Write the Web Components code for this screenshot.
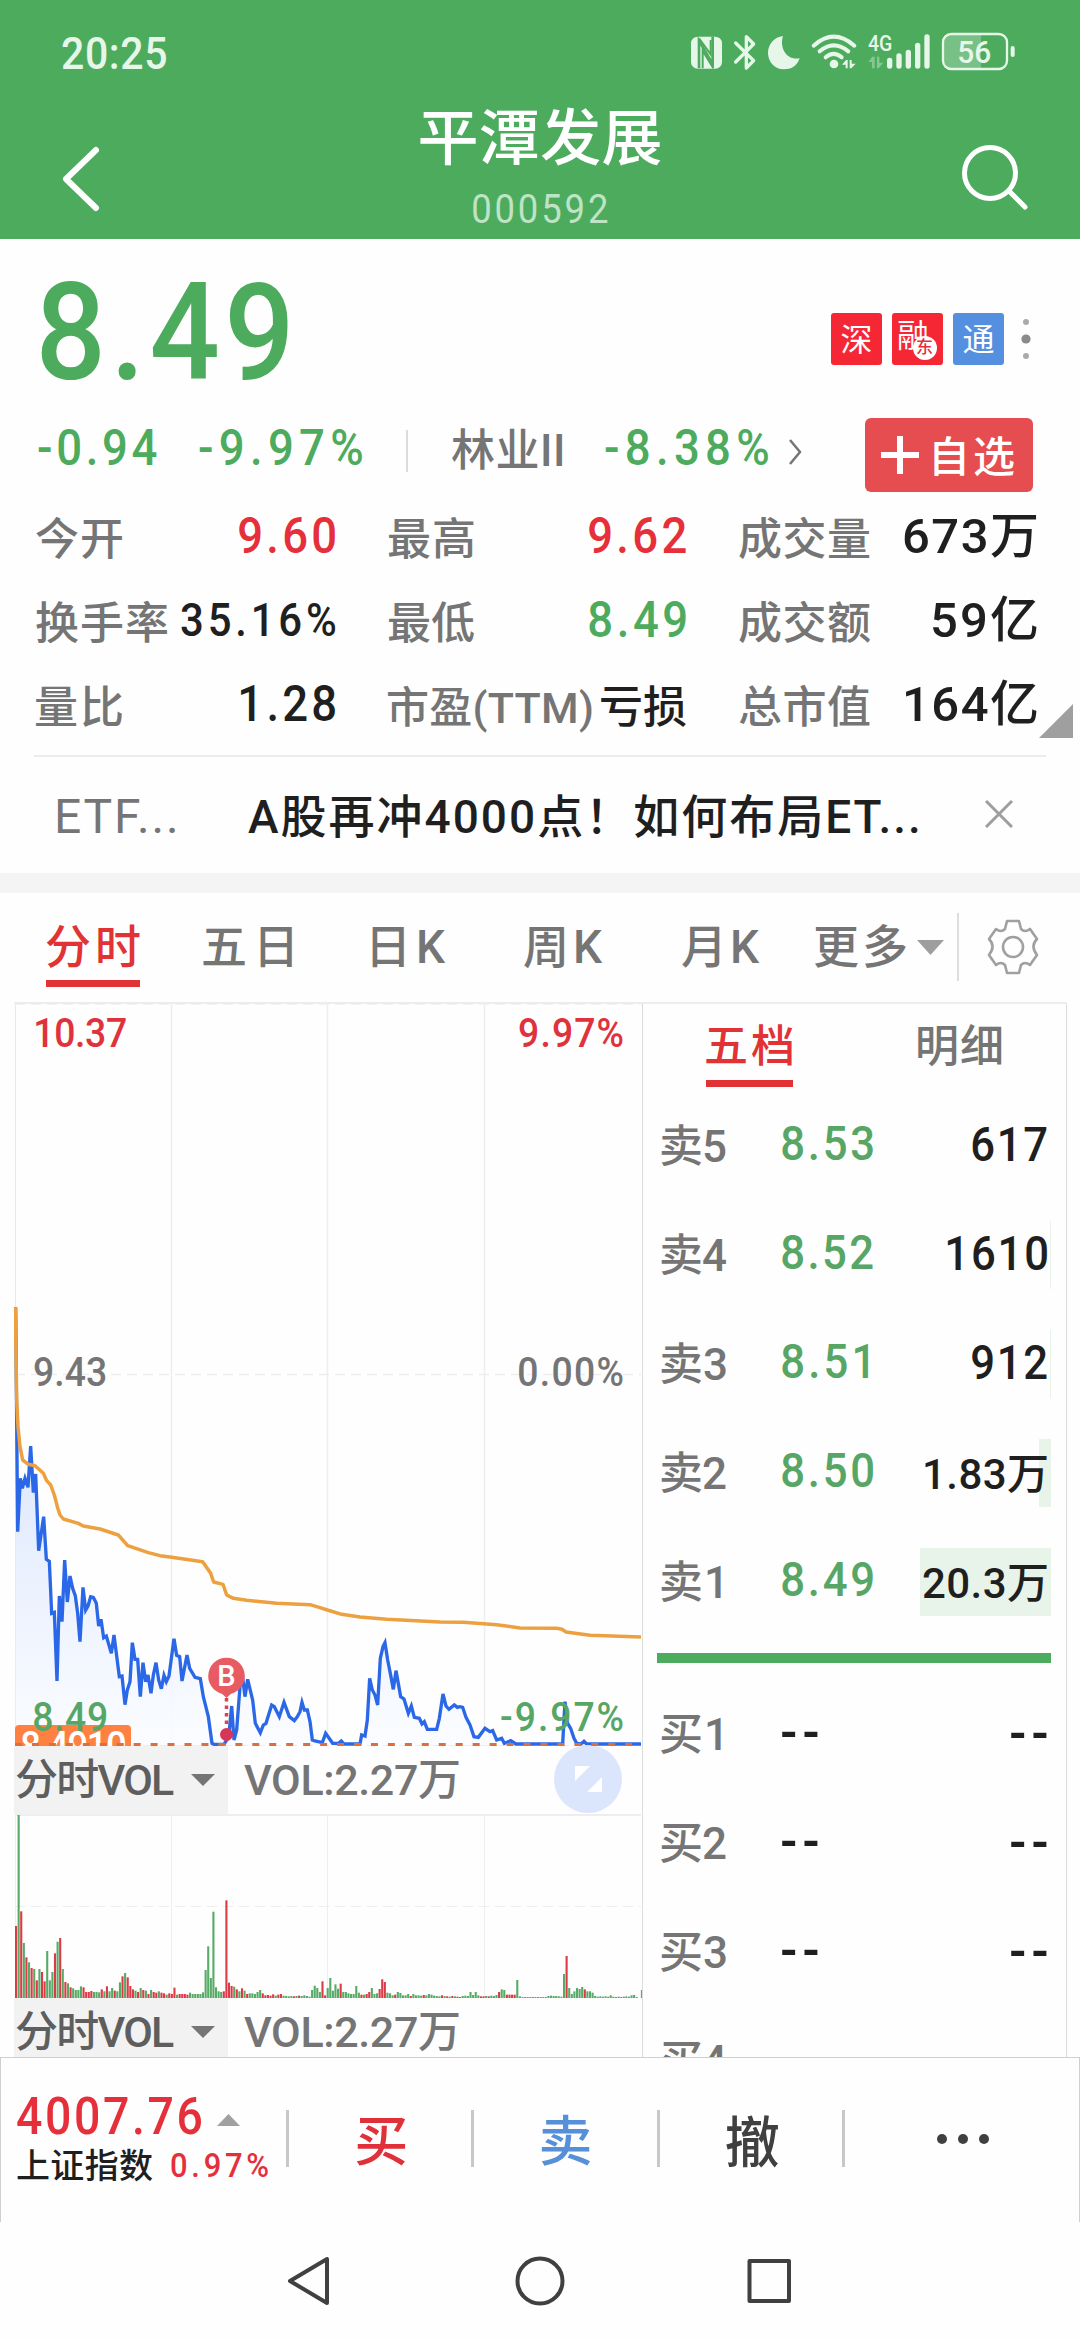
<!DOCTYPE html>
<html lang="zh-CN">
<head>
<meta charset="UTF-8">
<title>平潭发展 000592</title>
<style>
  body {
    margin: 0;
    width: 1080px;
    height: 2340px;
    overflow: hidden;
    background: #fefefe;
    font-family: Roboto, "Noto Sans CJK SC", sans-serif;
    --green: #4dab5e;
    --red: #e5303b;
    --grey: #757575;
    --ink: #1f1f1f;
  }
</style>
</head>
<body>
<stock-page></stock-page>

<script>
// registers a custom element whose shadow root is cloned from a template
function define(name, html, onConnect) {
  const template = document.createElement('template');
  template.innerHTML = '<style>:host, * { box-sizing: border-box; }</style>' + html;

  customElements.define(name, class extends HTMLElement {
    constructor() {
      super();
      this.attachShadow({ mode: 'open' });
      this.shadowRoot.appendChild(template.content.cloneNode(true));
    }

    connectedCallback() {
      if (onConnect) onConnect(this, this.shadowRoot);
    }
  });
}

// one line of text, tracked so that its ink fills the width in the attribute "w";
// plain numbers are drawn a little condensed
const pen = document.createElement('canvas').getContext('2d');

define('fit-text', `
  <style>
    :host { display: block; flex: none; white-space: nowrap; line-height: 1; }
    span { display: block; transform-origin: 0 50%; }
  </style>
  <span><slot></slot></span>
`, (el, root) => {
  const w = Number(el.getAttribute('w'));
  el.style.width = w + 'px';
  el.style.fontSize = el.getAttribute('size') + 'px';
  el.style.fontWeight = el.getAttribute('weight') || 400;
  const css = getComputedStyle(el);
  const text = el.textContent;
  const squeeze = /^[\d.%:-]+$/.test(text) ? 0.91 : 1;
  pen.font = css.fontWeight + ' ' + css.fontSize + ' ' + css.fontFamily;
  const m = pen.measureText(text);
  const ink = m.actualBoundingBoxLeft + m.actualBoundingBoxRight;
  const span = root.querySelector('span');
  span.style.letterSpacing = (text.length > 1 ? (w / squeeze - ink) / (text.length - 1) : 0) + 'px';
  span.style.textIndent = m.actualBoundingBoxLeft + 'px';
  if (squeeze !== 1) span.style.transform = `scaleX(${squeeze})`;
});

define('status-bar', `
  <style>
    :host { display: flex; height: 105px; padding: 20px 50px 0 62px; color: #e6f7e9; justify-content: space-between; }
    fit-text { padding-top: 11px; }
    svg { width: 350px; height: 70px; }
  </style>
  <fit-text w="104" size="45" weight="500">20:25</fit-text>
  <svg viewBox="0 0 1050 210" fill="none" stroke="#e6f7e9">
    <rect x="33" y="50" width="93" height="96" rx="20" fill="#e6f7e9" stroke="none"/>
    <path d="M57 145V62L98 132V50" stroke="#4dab5e" stroke-width="8"/>
    <path d="M68 145V92L100 145M57 55L92 103V60" stroke="#4dab5e" stroke-width="6"/>
    <path d="M167 69L221 122L199 144V50L221 72L167 126" stroke-width="10" stroke-linejoin="round" stroke-linecap="round"/>
    <path d="M309 48C298 82 318 122 359 115C351 139 333 148 312 148C282 148 264 124 264 99C264 72 283 51 309 48Z" fill="#e6f7e9" stroke="none"/>
    <path d="M401 77Q461 23 523 77M419 94Q461 58 505 94M437 112Q461 91 485 112" stroke-width="12" stroke-linecap="round"/>
    <circle cx="462" cy="132" r="13" fill="#e6f7e9" stroke="none"/>
    <path d="M486 134L498 120H503V145H497V134ZM509 120H515V131H527L514 145H509Z" fill="#e6f7e9" stroke="none"/>
    <text x="564" y="94" font-size="66" font-weight="500" textLength="73" lengthAdjust="spacingAndGlyphs" fill="#e6f7e9" stroke="none">4G</text>
    <path d="M565 126L577 110H584V145H576V126ZM591 110H598V128H610L596 145H591Z" fill="#86c792" stroke="none"/>
    <path d="M629 121V138M657 108V138M685 97V138M713 76V138M741 51V138" stroke-width="16" stroke-linecap="round"/>
    <path d="M812 44H903V146H812Q791 146 791 124V66Q791 44 812 44Z" fill="#78c085" stroke="none"/>
    <rect x="789" y="42" width="192" height="105" rx="25" stroke-width="7"/>
    <path d="M998 84V105" stroke-width="12" stroke-linecap="round"/>
    <text x="832" y="129" font-size="95" font-weight="500" textLength="102" lengthAdjust="spacingAndGlyphs" fill="#e6f7e9" stroke="none">56</text>
  </svg>
`);

define('title-bar', `
  <style>
    :host { display: grid; grid-template-columns: 200px 1fr 200px; height: 134px; color: #fff; }
    svg { width: 200px; height: 134px; fill: none; stroke: #fff; stroke-linecap: round; stroke-linejoin: round; }
    div { display: flex; flex-direction: column; align-items: center; gap: 20px; padding-top: 4px; }
    .code { color: #bfe3c5; }
  </style>
  <svg viewBox="0 105 200 134" stroke-width="6"><path d="M96 150L66 179L96 208"/></svg>
  <div>
    <fit-text w="241" size="61" weight="500">平潭发展</fit-text>
    <fit-text class="code" w="134" size="40">000592</fit-text>
  </div>
  <svg viewBox="880 105 200 134" stroke-width="5"><circle cx="990" cy="173" r="25.5"/><path d="M1009 191L1025 207"/></svg>
`);

define('stat-cell', `
  <style>
    :host { display: flex; justify-content: space-between; align-items: center; height: 84px; }
    .label { color: var(--grey); display: block; padding-top: 4px; }
    .value { color: var(--tone, var(--ink)); display: block; padding-bottom: 4px; }
  </style>
  <span class="label"><slot name="label"></slot></span>
  <span class="value"><slot></slot></span>
`);

define('quote-panel', `
  <style>
    :host { display: block; position: relative; height: 516px; padding: 26px 44px 0 38px; }
    .top, .move, .tags, .left { display: flex; align-items: center; }
    .top { justify-content: space-between; height: 136px; color: var(--green); }
    .top > fit-text { margin-left: 3px; }
    .tags { gap: 10px; padding-top: 11px; margin-right: 5px; }
    .tag { width: 51px; height: 52px; border-radius: 3px; background: #f62734; color: #fff; display: flex; justify-content: center; align-items: center; position: relative; padding-top: 3px; }
    .tag.blue { background: #5490df; }
    .dong { position: absolute; right: 6px; bottom: 5px; width: 24px; height: 24px; border-radius: 50%; background: #fff; color: #e5303b; display: flex; justify-content: center; align-items: center; }
    .margin { padding: 0 10px 6px 0; }
    .more { width: 10px; height: 44px; margin-left: 7px; }
    .move { height: 74px; margin-top: 17px; justify-content: space-between; }
    .left { color: var(--green); padding-bottom: 15px; }
    .sep { width: 2px; height: 42px; background: #dcdcdc; margin: 6px 44px 0 44px; }
    .sector { color: var(--grey); margin-right: 43px; padding-top: 7px; }
    .add { width: 168px; height: 74px; margin-right: 3px; border-radius: 6px; background: #e54d51; color: #fff; display: flex; align-items: center; gap: 15px; padding-left: 16px; }
    .add fit-text { padding-top: 6px; }
    .stats { display: grid; grid-template-columns: 299px 298px 298px; column-gap: 53px; margin: 4px 0 0 -2px; }
    .red { --tone: var(--red); }
    .green { --tone: var(--green); }
    .corner { position: absolute; right: 7px; bottom: 17px; width: 34px; height: 34px; background: #9f9f9f; clip-path: polygon(100% 0, 100% 100%, 0 100%); }
  </style>
  <div class="top">
    <fit-text w="247" size="136" weight="500">8.49</fit-text>
    <div class="tags">
      <div class="tag"><fit-text w="30" size="32">深</fit-text></div>
      <div class="tag margin"><fit-text w="29" size="32">融</fit-text><div class="dong"><fit-text w="16" size="17" weight="500">东</fit-text></div></div>
      <div class="tag blue"><fit-text w="30" size="32">通</fit-text></div>
      <svg class="more" viewBox="0 0 10 44" fill="#aaa"><circle cx="5" cy="5" r="3"/><circle cx="5" cy="22" r="4.6" fill="#8a8a8a"/><circle cx="5" cy="39" r="3"/></svg>
    </div>
  </div>
  <div class="move">
    <div class="left">
      <fit-text w="119" size="50" weight="500">-0.94</fit-text>
      <fit-text w="163" size="50" weight="500" style="margin-left:42px">-9.97%</fit-text>
      <i class="sep"></i>
      <fit-text class="sector" w="110" size="44" weight="500">林业II</fit-text>
      <fit-text w="163" size="50" weight="500">-8.38%</fit-text>
      <svg width="14" height="28" viewBox="0 0 14 28" style="margin:9px 0 0 20px" fill="none" stroke="#757575" stroke-width="2.5"><path d="M2 2L12 14L2 26"/></svg>
    </div>
    <div class="add">
      <svg width="38" height="38" viewBox="0 0 38 38" stroke="#fff" stroke-width="6"><path d="M19 0V38M0 19H38"/></svg>
      <fit-text w="80" size="42" weight="500">自选</fit-text>
    </div>
  </div>
  <div class="stats">
    <stat-cell class="red"><fit-text slot="label" w="86" size="44" weight="500">今开</fit-text><fit-text w="96" size="50" weight="500">9.60</fit-text></stat-cell>
    <stat-cell class="red"><fit-text slot="label" w="86" size="44" weight="500">最高</fit-text><fit-text w="97" size="50" weight="500">9.62</fit-text></stat-cell>
    <stat-cell><fit-text slot="label" w="131" size="44" weight="500">成交量</fit-text><fit-text w="133" size="49" weight="500">673万</fit-text></stat-cell>
    <stat-cell><fit-text slot="label" w="131" size="44" weight="500">换手率</fit-text><fit-text w="154" size="46" weight="500">35.16%</fit-text></stat-cell>
    <stat-cell class="green"><fit-text slot="label" w="86" size="44" weight="500">最低</fit-text><fit-text w="97" size="50" weight="500">8.49</fit-text></stat-cell>
    <stat-cell><fit-text slot="label" w="131" size="44" weight="500">成交额</fit-text><fit-text w="104" size="49" weight="500">59亿</fit-text></stat-cell>
    <stat-cell><fit-text slot="label" w="86" size="44" weight="500">量比</fit-text><fit-text w="94" size="50" weight="500">1.28</fit-text></stat-cell>
    <stat-cell><fit-text slot="label" w="204" size="43" weight="500">市盈(TTM)</fit-text><fit-text w="85" size="44" weight="500" style="padding-top:7px">亏损</fit-text></stat-cell>
    <stat-cell><fit-text slot="label" w="131" size="44" weight="500">总市值</fit-text><fit-text w="131" size="49" weight="500">164亿</fit-text></stat-cell>
  </div>
  <i class="corner"></i>
`);

define('news-strip', `
  <style>
    :host { display: flex; align-items: center; height: 118px; margin: 0 34px; padding: 4px 33px 0 23px; border-top: 2px solid #ececec; color: var(--grey); }
    .head { color: var(--ink); margin: 0 auto 0 73px; }
  </style>
  <fit-text w="118" size="48">ETF...</fit-text>
  <fit-text class="head" w="670" size="46" weight="500">A股再冲4000点！如何布局ET...</fit-text>
  <svg width="28" height="28" viewBox="0 0 28 28" stroke="#9e9e9e" stroke-width="3" style="margin-bottom:6px"><path d="M1 1L27 27M27 1L1 27"/></svg>
`);

define('chart-tabs', `
  <style>
    :host { display: flex; align-items: flex-start; height: 129px; padding: 20px 0 0 46px; border-top: 20px solid #f4f4f4; color: var(--grey); }
    fit-text { margin-top: 6px; padding-top: 5px; }
    .active { color: #e13235; border-bottom: 7px solid #e13235; height: 68px; }
    .arrow { width: 27px; height: 15px; background: #9e9e9e; clip-path: polygon(0 0, 100% 0, 50% 100%); margin: 27px 0 0 11px; flex: none; }
    .rule { width: 2px; height: 68px; background: #dedede; margin: 0 28px 0 13px; flex: none; }
    svg { flex: none; margin-top: 6px; }
  </style>
  <fit-text class="active" w="94" size="46" weight="500">分时</fit-text>
  <fit-text w="89" size="46" weight="500" style="margin-left:63px">五日</fit-text>
  <fit-text w="74" size="46" weight="500" style="margin-left:80px">日K</fit-text>
  <fit-text w="79" size="46" weight="500" style="margin-left:78px">周K</fit-text>
  <fit-text w="78" size="46" weight="500" style="margin-left:79px">月K</fit-text>
  <fit-text w="92" size="46" weight="500" style="margin-left:54px">更多</fit-text>
  <i class="arrow"></i>
  <i class="rule"></i>
  <svg width="52" height="56" viewBox="0 0 52 56" fill="none" stroke="#a0a0a0" stroke-width="2.6" stroke-linejoin="round">
    <path d="M20 2H32L34 10Q38 14 43 10L50 20Q43 27 50 36L43 46Q38 42 34 46L32 54H20L18 46Q14 42 9 46L2 36Q9 27 2 20L9 10Q14 14 18 10Z"/>
    <circle cx="26" cy="28" r="10"/>
  </svg>
`);

// polyline points in thirds of a pixel, y measured from the lower part of the plot
const price = [
  47,-278, 53,395, 61,235, 67,265, 75,235, 84,262, 92,138, 100,278, 107,222, 116,452, 131,350, 139,478, 148,484,
  155,640, 163,637, 171,843, 178,588, 186,665, 194,480, 202,606, 210,528, 218,565, 226,588, 233,640, 240,725,
  249,562, 257,630, 264,618, 272,590, 280,592, 289,610, 296,678, 303,658, 311,713, 319,708, 334,760, 342,705,
  358,830, 366,828, 375,914, 382,870, 390,845, 397,728, 405,778, 413,778, 421,890, 429,788, 437,845, 444,825,
  453,880, 460,825, 468,788, 476,840, 484,866, 492,826, 499,845, 507,828, 522,716, 530,766, 539,770, 546,843,
  561,765, 569,805, 585,832, 601,836, 610,890, 625,950, 636,1030, 642,1033, 672,1033, 686,1010, 695,918, 702,1020,
  710,990, 720,860, 727,826, 735,890, 743,838, 758,900, 766,970, 781,998, 790,975, 798,970, 815,915, 823,920,
  838,950, 852,907, 868,950, 883,962, 892,950, 900,935, 906,907, 913,930, 922,930, 930,965, 937,1020, 945,1023,
  967,1028, 977,1000, 998,1030, 1015,1030, 1024,1023, 1032,1032, 1080,1032, 1085,1005, 1095,1008, 1102,960,
  1109,835, 1117,870, 1125,885, 1133,915, 1141,775, 1149,740, 1155,728, 1163,780, 1171,820, 1180,868, 1188,812,
  1202,890, 1212,897, 1225,940, 1234,918, 1243,952, 1258,955, 1266,972, 1273,965, 1282,988, 1310,988, 1318,955,
  1329,882, 1338,918, 1347,928, 1363,915, 1372,922, 1380,920, 1388,922, 1398,952, 1410,975, 1422,1010, 1435,1012,
  1455,985, 1470,995, 1478,992, 1490,1020, 1505,1015, 1513,1030, 1532,1022, 1548,1032, 1688,1032, 1695,905,
  1703,970, 1712,985, 1722,1015, 1730,1030, 1743,1032, 1752,1024, 1760,1032, 1923,1032
];
const average = [
  46,-278, 50,0, 54,80, 60,140, 68,180, 85,193, 105,197, 130,220, 140,242, 152,255, 163,285, 172,320, 180,345,
  190,357, 235,370, 250,378, 300,387, 355,405, 383,437, 445,458, 480,467, 515,472, 608,485, 632,520, 641,546,
  669,553, 680,585, 700,595, 740,601, 830,610, 930,614, 960,623, 982,630, 1025,643, 1080,651, 1160,658, 1320,666,
  1390,667, 1490,674, 1560,684, 1670,685, 1686,688, 1698,696, 1770,706, 1923,711
];

define('price-plot', `
  <style>
    :host { display: block; position: relative; height: 744px; }
    svg { display: block; position: absolute; left: 0; top: 0; }
    fit-text { position: absolute; }
    .l { left: 20px; color: var(--tone); }
    .r { right: 19px; color: var(--tone); }
    .up { --tone: #e0323d; top: 11px; }
    .mid { --tone: var(--grey); top: 350px; }
    .down { --tone: #57a665; top: 695px; }
    .cost { position: absolute; left: 1px; top: 723px; width: 116px; height: 21px; border-radius: 4px 4px 0 0; background: #ff8142; color: #fff; overflow: hidden; }
    .cost fit-text { left: 7px; top: 2px; }
    .dash { z-index: 1; }
  </style>
  <svg width="628" height="744" viewBox="14 1002 628 744">
    <defs><linearGradient id="g" x1="0" y1="0" x2="0" y2="1"><stop offset="0" stop-color="#cfdefb"/><stop offset=".45" stop-color="#dfe9fd"/><stop offset="1" stop-color="#fafcff"/></linearGradient></defs>
    <path d="M171.500 1004V1744M327.500 1004V1744M484.500 1004V1744" stroke="#eee" stroke-width="1.500"/>
    <path d="M15.500 1002V1746" stroke="#e8e8e8"/>
    <path d="M15 1374.500H641M15 1004H641M15 1745.500H641" stroke="#eee" stroke-width="1.500" stroke-dasharray="10 6"/>
    <g transform="translate(0 1400) scale(.33333)">
      <polygon id="area" fill="url(#g)" opacity=".85"/>
      <polyline id="price" fill="none" stroke="#2b68e8" stroke-width="10"/>
      <polyline id="avg" fill="none" stroke="#eda03f" stroke-width="10.5" stroke-linejoin="round"/>
    </g>
  </svg>
  <fit-text class="l up" w="90" size="41" weight="500" style="margin-left:2px">10.37</fit-text>
  <fit-text class="r up" w="104" size="41" weight="500">9.97%</fit-text>
  <fit-text class="l mid" w="72" size="41" weight="500">9.43</fit-text>
  <fit-text class="r mid" w="104" size="41" weight="500">0.00%</fit-text>
  <div class="cost"><fit-text w="103" size="40" weight="500">8.4910</fit-text></div>
  <fit-text class="l down" w="72" size="41" weight="500">8.49</fit-text>
  <fit-text class="r down" w="122" size="41" weight="500">-9.97%</fit-text>
  <svg class="dash" width="628" height="744" viewBox="14 1002 628 744">
    <path d="M15 1744.500H641" stroke="#dc6f3e" stroke-width="3" stroke-dasharray="7 9.950"/>
    <path d="M226.500 1698V1728" stroke="#d9434f" stroke-width="3.500" stroke-dasharray="3.500 4"/>
    <circle cx="226.500" cy="1734.500" r="6.500" fill="#d6365a"/>
    <circle cx="226.500" cy="1676" r="18.300" fill="#e95b63"/>
    <path d="M218 1690H235L226.500 1698Z" fill="#e95b63"/>
    <text x="226.500" y="1686" text-anchor="middle" font-size="29" font-weight="500" fill="#fff">B</text>
  </svg>
`, (el, root) => {
  root.getElementById('price').setAttribute('points', price.join(' '));
  root.getElementById('avg').setAttribute('points', average.join(' '));
  root.getElementById('area').setAttribute('points', price.join(' ') + ' 1923,1034 47,1034');
});

define('vol-head', `
  <style>
    :host { display: flex; position: relative; height: 68px; margin-right: 1px; }
    .pick { width: 214px; height: 68px; background: #f2f2f2; color: #5e5e5e; padding: 13px 0 0 2px; display: flex; flex: none; }
    .pick i { width: 24px; height: 12px; background: #757575; clip-path: polygon(0 0, 100% 0, 50% 100%); margin: 15px 0 0 17px; }
    .val { color: var(--grey); margin: 13px 0 0 16px; }
    ::slotted(svg) { position: absolute; right: 19px; top: -1px; }
  </style>
  <div class="pick"><fit-text w="158" size="43" weight="500">分时VOL</fit-text><i></i></div>
  <fit-text class="val" w="215" size="43" weight="500">VOL:2.27万</fit-text>
  <slot></slot>
`);

// r / g is the bar colour, the number is the bar height in thirds of a pixel
const bars = ('r216 g549 r260 g165 r122 g107 r90 g87 r53 g87 r78 r50 g141 g53 g78 r134 g169 r180 g87 r48 g44 r32 g29 g24 g24 g35 r32 r18 r18 r21 ' +
  'g18 g18 g17 r26 g20 r35 g20 g30 r22 g20 g47 r65 g75 r62 r36 r26 g22 r18 g30 r24 g22 r12 g24 r18 r16 g20 r16 r14 g10 r14 ' +
  'r12 r31 g10 r12 r12 r12 r10 g16 g12 g12 g12 g12 g17 g84 g155 g60 g259 g32 g20 g18 r20 r293 r46 r36 g34 r26 g20 r29 g22 r12 ' +
  'g14 g14 g12 g18 g24 r14 r8 r9 r7 r11 g7 r10 r12 g7 g6 g5 g6 r5 g6 r7 g6 g8 g6 g4 g24 g37 g30 g18 r50 r8 ' +
  'g30 g60 g22 g41 g28 r43 g18 g18 g14 g12 g12 g36 g16 r10 g10 r12 r18 g30 g12 g14 r27 r56 r48 g16 g14 g8 r10 g18 g15 g8 ' +
  'g8 g12 r6 g12 g8 g8 g7 r9 g8 g12 g10 g7 g6 g5 r8 g6 r5 g4 r6 g5 r4 r3 g6 g7 g6 g18 g9 g18 g8 r5 ' +
  'r5 g6 r5 g7 g6 g9 r18 g26 g24 r10 r10 r10 r10 g54 g5 g3 g3 g3 g3 g3 g3 g3 g3 g3 g3 g6 g7 g6 g6 g5 ' +
  'g4 g72 r126 g30 g12 g20 g30 g27 g33 r26 g20 g20 g16 g6 g4 g5 g4 g5 g4 g8 g4 g3 g4 g3 g4 g5 g4 g8 g9 g3 g0 g24').split(' ');

define('volume-plot', `
  <style>
    :host { display: block; height: 184px; }
    svg { display: block; }
  </style>
  <svg width="628" height="184" viewBox="14 1814 628 184" shape-rendering="crispEdges">
    <path d="M15 1815H641M171.500 1814V1998M327.500 1814V1998M484.500 1814V1998M15.500 1814V1998" stroke="#eee" stroke-width="1.500" fill="none"/>
    <path d="M15 1906.500H641" stroke="#eee" stroke-dasharray="10 6"/>
    <g id="bars" shape-rendering="auto"></g>
  </svg>
`, (el, root) => {
  root.getElementById('bars').innerHTML = bars.map((bar, i) => {
    const h = Number(bar.slice(1)) / 3;
    const fill = bar[0] === 'r' ? '#dc3a45' : '#57ab66';
    return `<rect x="${15 + i * 2.597}" y="${1998 - h}" width="2.1" height="${h}" fill="${fill}"/>`;
  }).join('');
});

define('book-row', `
  <style>
    :host { display: grid; grid-template-columns: 121px 92px 1fr; align-items: center; height: 109px; padding-left: 4px; background: linear-gradient(#e8f3ea, #e8f3ea) right center / var(--depth, 0) 68px no-repeat; }
    .name { color: var(--grey); padding-top: 3px; }
    .price { color: var(--tone, var(--ink)); padding-bottom: 3px; }
    .qty { color: var(--ink); justify-self: end; padding-right: 4px; padding-bottom: 1px; }
  </style>
  <div class="name"><slot name="name"></slot></div>
  <div class="price"><slot name="price"></slot></div>
  <div class="qty"><slot></slot></div>
`);

define('order-book', `
  <style>
    :host { display: block; padding: 0 15px 0 14px; border-left: 1.500px solid #dcdcdc; border-right: 1.500px solid #dcdcdc; }
    .tabs { display: flex; height: 87px; padding: 21px 0 0 49px; color: var(--grey); }
    .on { color: #e13235; border-bottom: 7px solid #e13235; height: 62px; }
    .sell { --tone: #57a665; }
    .ratio { height: 10px; background: var(--green); margin: 17px 0 16px; }
  </style>
  <div class="tabs">
    <fit-text class="on" w="87" size="44" weight="500">五档</fit-text>
    <fit-text w="84" size="44" weight="500" style="margin-left:125px">明细</fit-text>
  </div>
  <div class="sell">
    <book-row><fit-text slot="name" w="65" size="44" weight="500">卖5</fit-text><fit-text slot="price" w="91" size="48" weight="500">8.53</fit-text><fit-text w="75" size="48" weight="500">617</fit-text></book-row>
    <book-row style="--depth:1px"><fit-text slot="name" w="65" size="44" weight="500">卖4</fit-text><fit-text slot="price" w="91" size="48" weight="500">8.52</fit-text><fit-text w="100" size="48" weight="500">1610</fit-text></book-row>
    <book-row style="--depth:1px"><fit-text slot="name" w="65" size="44" weight="500">卖3</fit-text><fit-text slot="price" w="86" size="48" weight="500">8.51</fit-text><fit-text w="75" size="48" weight="500">912</fit-text></book-row>
    <book-row style="--depth:12px"><fit-text slot="name" w="65" size="44" weight="500">卖2</fit-text><fit-text slot="price" w="91" size="48" weight="500">8.50</fit-text><fit-text w="122" size="42" weight="500" style="padding-top:5px">1.83万</fit-text></book-row>
    <book-row style="--depth:131px"><fit-text slot="name" w="60" size="44" weight="500">卖1</fit-text><fit-text slot="price" w="91" size="48" weight="500">8.49</fit-text><fit-text w="124" size="42" weight="500" style="padding-top:5px">20.3万</fit-text></book-row>
  </div>
  <div class="ratio"></div>
  <book-row><fit-text slot="name" w="60" size="44" weight="500">买1</fit-text><fit-text slot="price" w="36" size="55" weight="500">--</fit-text><fit-text w="36" size="55" weight="500">--</fit-text></book-row>
  <book-row><fit-text slot="name" w="65" size="44" weight="500">买2</fit-text><fit-text slot="price" w="36" size="55" weight="500">--</fit-text><fit-text w="36" size="55" weight="500">--</fit-text></book-row>
  <book-row><fit-text slot="name" w="65" size="44" weight="500">买3</fit-text><fit-text slot="price" w="36" size="55" weight="500">--</fit-text><fit-text w="36" size="55" weight="500">--</fit-text></book-row>
  <book-row><fit-text slot="name" w="65" size="44" weight="500">买4</fit-text></book-row>
`);

define('market-area', `
  <style>
    :host { display: flex; height: 1055px; overflow: hidden; margin: 0 13px 0 14px; border-top: 2px solid #ededed; }
    .charts { width: 628px; flex: none; }
    order-book { flex: 1; }
    price-plot { margin-top: -2px; }
  </style>
  <div class="charts">
    <price-plot></price-plot>
    <vol-head>
      <svg width="68" height="68" viewBox="0 0 68 68"><circle cx="34" cy="34" r="34" fill="#dbe5fb"/><path d="M21 21H36L21 36ZM48 32V47H33Z" fill="#fff"/></svg>
    </vol-head>
    <volume-plot></volume-plot>
    <vol-head></vol-head>
  </div>
  <order-book></order-book>
`);

define('trade-bar', `
  <style>
    :host { display: flex; align-items: flex-start; height: 165px; border: 1.500px solid #cfcfcf; border-bottom: 0; padding: 33px 0 0 16px; background: #fefefe; }
    .index { width: 269px; color: var(--red); flex: none; }
    .row { display: flex; }
    .row i { width: 23px; height: 12px; margin: 23px 0 0 16px; background: #a0a0a0; clip-path: polygon(50% 0, 100% 100%, 0 100%); }
    .name { color: var(--ink); margin-right: 18px; padding-top: 3px; }
    .row + .row { margin-top: 4px; align-items: center; }
    .act { width: 185.300px; height: 57px; margin-top: 19px; border-left: 3px solid #c8c8c8; display: flex; align-items: center; justify-content: center; padding: 9px 0 0 2px; flex: none; }
    .buy { color: #e0313b; }
    .sell { color: #5590d8; }
    .undo { color: #404040; }
    .more { gap: 11px; padding: 0 0 0 4px; width: 236px; }
    .more b { width: 10px; height: 10px; border-radius: 50%; background: #404040; }
  </style>
  <div class="index">
    <div class="row"><fit-text w="184" size="51" weight="500">4007.76</fit-text><i></i></div>
    <div class="row"><fit-text class="name" w="136" size="34" weight="500">上证指数</fit-text><fit-text w="97" size="34" weight="500">0.97%</fit-text></div>
  </div>
  <div class="act buy"><fit-text w="50" size="54" weight="500">买</fit-text></div>
  <div class="act sell"><fit-text w="50" size="54" weight="500">卖</fit-text></div>
  <div class="act undo"><fit-text w="52" size="55" weight="500">撤</fit-text></div>
  <div class="act more"><b></b><b></b><b></b></div>
`);

define('nav-bar', `
  <style>
    :host { display: block; height: 118px; }
    svg { display: block; fill: none; stroke: #404040; stroke-width: 4; stroke-linejoin: round; }
  </style>
  <svg width="1080" height="118" viewBox="0 2222 1080 118">
    <path d="M327 2259V2303L290 2281Z"/>
    <circle cx="540" cy="2281" r="22.500"/>
    <rect x="749.500" y="2261" width="39.500" height="40"/>
  </svg>
`);

define('stock-page', `
  <style>
    :host { display: flex; flex-direction: column; height: 2340px; }
    header { background: var(--green); height: 239px; flex: none; }
    quote-panel, news-strip, chart-tabs, market-area, trade-bar, nav-bar { flex: none; }
  </style>
  <header>
    <status-bar></status-bar>
    <title-bar></title-bar>
  </header>
  <quote-panel></quote-panel>
  <news-strip></news-strip>
  <chart-tabs></chart-tabs>
  <market-area></market-area>
  <trade-bar></trade-bar>
  <nav-bar></nav-bar>
`);
</script>
</body>
</html>
